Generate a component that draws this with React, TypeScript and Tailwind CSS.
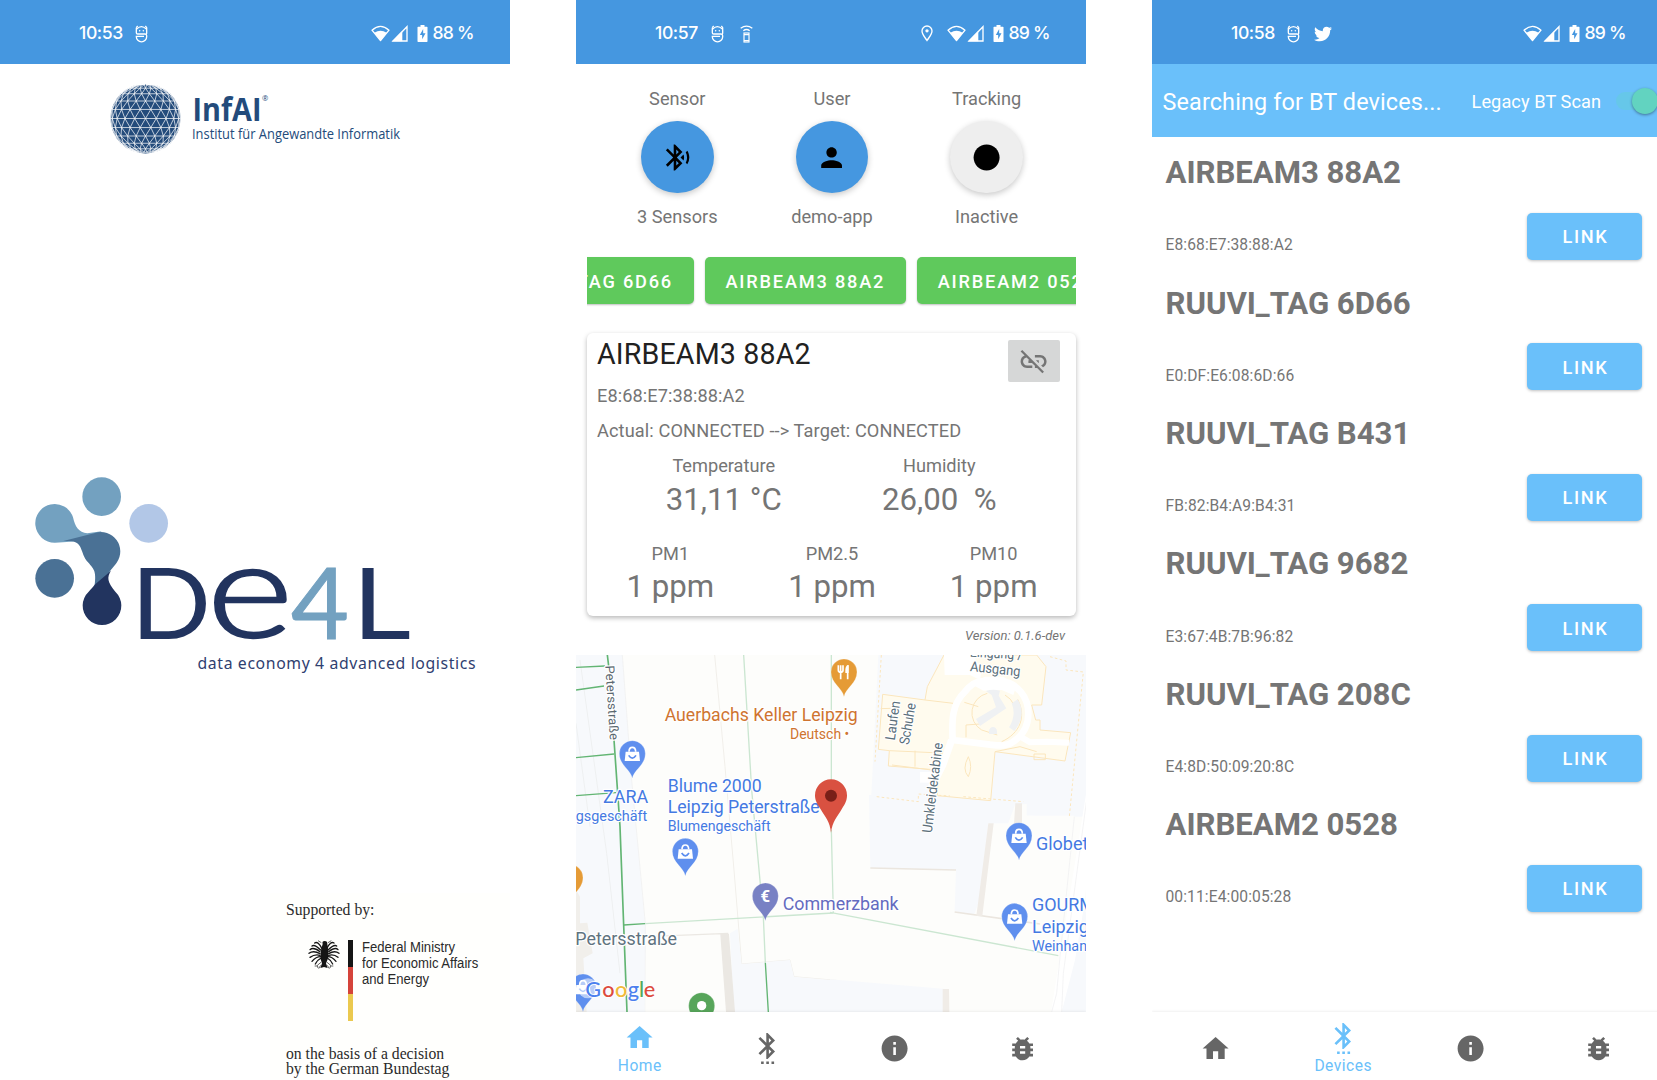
import React from "react";
import type { ReactNode } from "react";
import {
  MdBluetoothSearching,
  MdBugReport,
  MdHome,
  MdInfo,
  MdLens,
  MdLinkOff,
  MdPerson,
  MdSettingsBluetooth,
} from "react-icons/md";
import { FaTwitter } from "react-icons/fa";

/* ---------- status bar ---------- */

function FaceIcon() {
  return (
    <svg width="13" height="18" viewBox="0 0 39 54" fill="none" stroke="white" strokeWidth="4">
      <path d="M35 26V8l-4-5M4 8l4-5M4 8v15q0 4 4 4h22q5 0 5 5v3a15.500 15.500 0 0 1-31 0v-1h23" />
      <path d="M5 12Q19-2 34 12" strokeWidth="3.5" />
      <circle cx="14" cy="17" r="2.300" fill="white" stroke="none" />
      <circle cx="25" cy="17" r="2.300" fill="white" stroke="none" />
    </svg>
  );
}

function RemoteIcon() {
  return (
    <svg width="13" height="18" viewBox="0 0 39 54" fill="none" stroke="white" strokeWidth="4">
      <rect x="12" y="24" width="15" height="27" strokeWidth="3.5" />
      <path d="M10 17q9.500-7 19 0M2 10q17.500-13 35 0" />
      <path d="M12 29h15M12 47h15" />
    </svg>
  );
}

function PlaceIcon() {
  return (
    <svg width="12" height="17" viewBox="0 0 36 50" fill="none" stroke="white" strokeWidth="4">
      <path d="M18 46C10 34 3 27 3 17.500a15 15 0 0 1 30 0C33 27 26 34 18 46z" />
      <circle cx="18" cy="17" r="5" fill="white" stroke="none" />
    </svg>
  );
}

function WifiIcon() {
  return (
    <svg width="19" height="17" viewBox="0 0 57 50">
      <path d="M3 15Q28.500-8 54 15L28.500 46z" fill="none" stroke="white" strokeWidth="4" strokeLinejoin="round" />
      <path d="M10 23q18.500-12 37 0L28.500 47z" fill="white" />
    </svg>
  );
}

function SignalIcon() {
  return (
    <svg width="17" height="17" viewBox="0 0 51 51">
      <path d="M48 5v43H6z" fill="none" stroke="white" strokeWidth="4" />
      <path d="M34 18v31H3z" fill="white" />
    </svg>
  );
}

function BatteryIcon() {
  return (
    <svg width="11" height="17" viewBox="0 0 32 51">
      <path d="M10 0h12v5h7q2 0 2 2v42q0 2-2 2H3q-2 0-2-2V7q0-2 2-2h7z" fill="white" />
      <path d="M18 12L8 30h7v13l10-18h-7z" fill="#4597e0" />
    </svg>
  );
}

function StatusBar({ time, battery, extra, location }: { time: string; battery: string; extra?: ReactNode; location?: boolean }) {
  return (
    <header className="flex h-16 shrink-0 items-center bg-[#4597e0] pt-[3px] pl-[79px] font-['Inter'] text-[17.6px] font-medium text-white">
      <span className="w-14 tracking-[-0.4px]">{time}</span>
      <span className="flex w-[29px]"><FaceIcon /></span>
      <span className="flex w-[181px]">{extra}</span>
      <span className="flex w-[26px]">{location && <PlaceIcon />}</span>
      <WifiIcon />
      <span className="ml-[1px]"><SignalIcon /></span>
      <span className="ml-[9px]"><BatteryIcon /></span>
      <span className="ml-[4.500px] whitespace-nowrap tracking-[-0.8px]">{battery}</span>
    </header>
  );
}

/* ---------- bottom navigation ---------- */

const NAV = [
  { label: "Home", Icon: MdHome },
  { label: "Devices", Icon: MdSettingsBluetooth },
  { label: "Info", Icon: MdInfo },
  { label: "Debug", Icon: MdBugReport },
];

function BottomNav({ active }: { active: string }) {
  return (
    <nav className="grid h-[68px] shrink-0 grid-cols-4 bg-white shadow-[0_-1px_2px_rgba(0,0,0,0.06)]">
      {NAV.map(({ label, Icon }) =>
        label === active ? (
          <div key={label} className="flex flex-col items-center pt-[10.500px] text-[#6ac0fa]">
            <Icon size={31.2} />
            <span className="mt-[2.300px] text-[15.6px] leading-5 tracking-[0.5px]">{label}</span>
          </div>
        ) : (
          <div key={label} className="flex flex-col items-center pt-[20.700px] text-[#666666]">
            <Icon size={31.2} />
          </div>
        ),
      )}
    </nav>
  );
}

/* ---------- splash screen ---------- */

function globeLines() {
  const rad = Math.PI / 180;
  const out: string[] = [];
  const project = (lat: number, lon: number) =>
    `${(35 * Math.cos(lat * rad) * Math.sin(lon * rad)).toFixed(2)} ${(-35 * Math.sin(lat * rad)).toFixed(2)}`;
  for (let row = -5; row <= 5; row++) {
    const shift = row % 2 === 0 ? 0 : 9;
    for (let i = -6; i <= 6; i++) {
      const lon = i * 18 + shift;
      if (Math.abs(lon) > 90) continue;
      const a = project(row * 15, lon);
      if (lon + 18 <= 90) out.push(`M${a}L${project(row * 15, lon + 18)}`);
      if (lon + 9 <= 90) out.push(`M${a}L${project(row * 15 + 15, lon + 9)}`);
      if (lon - 9 >= -90) out.push(`M${a}L${project(row * 15 + 15, lon - 9)}`);
    }
  }
  return out.join("");
}

function InfaiLogo() {
  return (
    <svg width="300" height="76" viewBox="108 80 300 76" fill="#234b7b" className="ml-[108px]">
      <circle cx="145.500" cy="118.500" r="35" />
      <path d={globeLines()} transform="translate(145.500 118.500)" stroke="white" strokeWidth="0.9" strokeOpacity="0.8" fill="none" />
      <g fontFamily="'Open Sans', sans-serif">
        <text x="192.500" y="120.500" fontSize="33" fontWeight="700" textLength="69" lengthAdjust="spacingAndGlyphs">InfAI</text>
        <text x="262" y="101" fontSize="7.500">®</text>
        <text x="192" y="138.600" fontSize="15" textLength="208" lengthAdjust="spacingAndGlyphs">Institut für Angewandte Informatik</text>
      </g>
    </svg>
  );
}

function De4lLogo() {
  return (
    <svg width="450" height="206" viewBox="30 470 450 206" className="ml-[30px]">
      <g transform="translate(0 460) scale(0.33333)">
        <circle cx="305" cy="110" r="58" fill="#73a1c0" />
        <circle cx="446" cy="190" r="58" fill="#b2c7e7" />
        <circle cx="164" cy="355" r="58" fill="#4a7195" />
        <path d="M165 248A58 58 0 1 1 219 172C225 200 236 218 262 220L305 214L270 240L200 246z" fill="#73a1c0" />
        <path d="M190 243L285 219A58 58 0 0 1 350 308C338 324 326 335 322 350L283 385C290 335 284 330 264 307C238 278 252 243 206 243z" fill="#4a7195" />
        <path d="M333 332C320 352 322 365 346 395A58 58 0 1 1 266 395C273 386 280 380 284 374z" fill="#22345f" />
      </g>
      <g fontFamily="Lato, sans-serif" fill="#22345f">
        <text x="131" y="638.500" fontSize="98" textLength="80" lengthAdjust="spacingAndGlyphs">D</text>
        <text x="207" y="636.500" fontSize="132" fontWeight="300" stroke="#22345f" strokeWidth="2.500" textLength="86" lengthAdjust="spacingAndGlyphs">e</text>
        <text x="291" y="638.500" fontSize="98" fill="#73a1c0" stroke="#73a1c0" strokeWidth="1" textLength="58" lengthAdjust="spacingAndGlyphs">4</text>
        <text x="352" y="638.500" fontSize="98" textLength="59" lengthAdjust="spacingAndGlyphs">L</text>
      </g>
      <text x="197.500" y="669" fontFamily="'Noto Sans', sans-serif" fontSize="15.800" fill="#2f4070" textLength="278">
        data economy 4 advanced logistics
      </text>
    </svg>
  );
}

function Eagle() {
  return (
    <svg width="32" height="30" viewBox="0 0 96 90" fill="none" stroke="#151515">
      <path d="M44 12q-3-9 6-9 9 0 8 9l2 14q4 26-6 44l5 14-11-3-11 3 5-14Q34 52 40 26z" fill="#151515" stroke="none" />
      <g strokeWidth="4" strokeLinecap="round">
        <path d="M42 26Q30 2 20 9M38 30Q20 12 12 18M36 35Q16 20 6 29M36 41Q16 30 3 40M36 46Q20 42 6 52M38 50Q24 50 12 64M40 54Q30 58 22 72" />
        <path d="M56 26Q68 2 78 9M60 30Q78 12 86 18M62 35Q82 20 90 29M62 41Q80 30 93 40M62 46Q78 42 90 52M60 50Q72 50 84 64M58 54Q66 58 74 72" />
      </g>
      <path d="M40 66l-12 10 2 8M56 66l12 10-2 8M28 78l-8 0M68 78l8 0M38 76l-6 10M58 76l6 10M40 8L30 2M60 8l10-6" strokeWidth="2.500" stroke="#444" />
    </svg>
  );
}

function SplashScreen() {
  return (
    <section className="flex h-[1080px] w-[510px] shrink-0 flex-col overflow-hidden bg-white">
      <StatusBar time="10:53" battery="88 %" />
      <div className="pt-4"><InfaiLogo /></div>
      <div className="mt-[314px]"><De4lLogo /></div>
      <div className="mt-[217px] ml-[270px] flex-1 bg-[#fffffd] pt-[1.500px] pl-[16px] text-[#2a2a2a]">
        <p className="w-max origin-left scale-x-[0.98] font-['Liberation_Serif'] text-[16px] leading-[30px]">Supported by:</p>
        <div className="mt-[15px] ml-[22px] flex">
          <Eagle />
          <div className="ml-[8px] flex h-[81px] w-[5px] flex-col">
            <i className="flex-1 bg-[#151515]" />
            <i className="flex-1 bg-[#d5443a]" />
            <i className="flex-1 bg-[#ebc94f]" />
          </div>
          <p className="-mt-[1px] ml-[8.500px] origin-left scale-x-[0.845] font-['Liberation_Sans'] text-[15.500px] leading-4 whitespace-nowrap">
            Federal Ministry
            <br />
            for Economic Affairs
            <br />
            and Energy
          </p>
        </div>
        <p className="mt-[25.500px] w-max origin-left scale-x-[0.98] font-['Liberation_Serif'] text-[16px] leading-[15px] whitespace-nowrap">
          on the basis of a decision
          <br />
          by the German Bundestag
        </p>
      </div>
    </section>
  );
}

/* ---------- home screen ---------- */

function Fab({ title, caption, tone, children }: { title: string; caption: string; tone: string; children: ReactNode }) {
  return (
    <div className="flex flex-col items-center">
      <span className="leading-6">{title}</span>
      <button className={`mt-[10px] flex size-[72.700px] items-center justify-center rounded-full text-black shadow-[0_2px_6px_rgba(0,0,0,0.22)] ${tone}`}>
        {children}
      </button>
      <span className="mt-[12px] leading-6">{caption}</span>
    </div>
  );
}

function Chip({ children }: { children: ReactNode }) {
  return (
    <span className="flex h-[47px] shrink-0 items-center rounded-[5px] bg-[#5fc95c] px-[21px] pt-px text-[18.2px] font-medium tracking-[1.8px] whitespace-nowrap text-white shadow-[0_1px_2px_rgba(0,0,0,0.25)]">
      {children}
    </span>
  );
}

function Reading({ label, value }: { label: string; value: string }) {
  return (
    <div className="flex flex-col items-center">
      <span className="leading-6">{label}</span>
      <span className="mt-[3.700px] text-[31.2px] leading-9 whitespace-pre">{value}</span>
    </div>
  );
}

function Pin({ x, y, fill, children }: { x: number; y: number; fill: string; children?: ReactNode }) {
  return (
    <g transform={`translate(${x} ${y})`}>
      <path d="M0 74C-5 48-39 34-39 0A39 39 0 1 1 39 0C39 34 5 48 0 74z" fill={fill} stroke="#ffffff" strokeOpacity="0.35" strokeWidth="2" />
      {children}
    </g>
  );
}

function Bag() {
  return (
    <g>
      <path d="M-20-6h40l3 28h-46z" fill="white" />
      <path d="M-10-6q0-13 10-13t10 13" fill="none" stroke="white" strokeWidth="5" />
      <path d="M-11 5q11 17 22 0" fill="none" stroke="#5b8def" strokeWidth="5" />
    </g>
  );
}

function ShopPin({ x, y }: { x: number; y: number }) {
  return <Pin x={x} y={y} fill="#5f8fee"><Bag /></Pin>;
}

function Mall() {
  return (
    <g transform="translate(870 650) scale(0.33333)">
      <path d="M165 150L172 110L222 15H500L528 50L515 165L485 165L497 210H510V240L602 248L585 333L375 305L362 452L202 437L205 360L55 348L58 302L25 298L38 133z" fill="#fffbee" stroke="#fbe6bd" strokeWidth="3" />
      <path d="M165 150L250 160M58 302L235 310M135 302V350M66 345L200 362M62 175L32 176M492 312H526V329H492zM375 305L450 290L500 305" fill="none" stroke="#fbe6bd" strokeWidth="3" />
      <path d="M34 15L15 335M20 440L145 455V432L240 438M280 440L460 455M540 20L588 33V60L640 66L598 500" fill="none" stroke="#fbe6bd" strokeWidth="3" strokeDasharray="8 7" />
      <path d="M222 15H310L335 60L330 90L300 75H224z" fill="white" />
      <path d="M248 275C246 220 242 165 285 125C305 100 325 90 345 95H400C440 100 475 140 475 190C475 240 450 262 430 275C410 290 390 287 360 284L248 270" fill="none" stroke="white" strokeWidth="20" strokeLinejoin="round" />
      <path d="M300 100L345 80H400L440 105L430 135L395 120L340 122z" fill="white" />
      <path d="M455 262L480 277L530 275L597 278" fill="none" stroke="white" strokeWidth="18" />
      <path d="M245 270L218 345L180 420" fill="none" stroke="white" strokeWidth="22" />
      <path d="M352 130A60 60 0 0 0 335 240L382 255M405 135A62 62 0 0 1 432 165M443 148C470 200 450 250 395 275M288 262V225L330 222M283 157L325 170M295 320q14 30 0 60-20-22 0-60z" fill="none" stroke="#fbe6bd" strokeWidth="3" />
      <path d="M348 123Q368 116 390 122L386 137L409 175L330 228L318 207L378 172L365 135zM425 160L443 148Q472 195 433 243L417 232Q440 195 425 160zM357 252v-8a12 13 0 0 1 24 0v8z" fill="#eff1f3" />
      <path d="M150 366H198V398H150z" fill="white" />
    </g>
  );
}

function StreetMap() {
  return (
    <svg width="510" height="357" viewBox="576 655 510 357" className="block shrink-0" fontFamily="Roboto, sans-serif">
      <rect x="576" y="655" width="510" height="357" fill="#fdfdfb" />
      {/* western half */}
      <g transform="translate(570 640) scale(0.33333)">
        <path d="M18 45H157L185 420L228 880L224 1116H18z" fill="#f7f9fc" />
        <path d="M157 45L185 420L226 850V1116" fill="none" stroke="#efefef" strokeWidth="2" />
        <path d="M30 60L110 640L150 1000M18 250L60 560" fill="none" stroke="#eef0f1" strokeWidth="3" />
        <path d="M434 45L465 380L492 690L515 972L660 960L672 1010L810 1022" fill="none" stroke="#f1efea" strokeWidth="3" />
        <path d="M480 880L503 866L515 972L660 960L672 1010L810 1022V1116H492z" fill="#f7f9fc" />
        <path d="M18 750L30 770V850L52 848L68 940L40 955L50 1116H18z" fill="#f1efeb" />
        <path d="M228 885L453 882L472 1116H226z" fill="#fdfdfb" />
        <path d="M228 890L475 880M453 884H475L493 1116H470z" fill="#ebe8e3" stroke="#ebe8e3" strokeWidth="4" />
        <g fill="none" stroke="#62b573" strokeWidth="4">
          <path d="M112 45L116 78M132 300L150 560L161 855L171 1116" strokeWidth="5" />
          <path d="M18 82L105 78M18 150L102 138M18 353L132 342M18 467L138 458M161 855L225 851M586 968L595 1116" />
        </g>
        <g fill="none" stroke="#cbe6d1" strokeWidth="4">
          <path d="M521 45L545 450L580 830L586 968M225 851L790 819M784 45V420M784 570L790 819" />
        </g>
      </g>
      {/* eastern half */}
      <g transform="translate(830 640) scale(0.33333)">
        <path d="M145 45H770V530L590 527V492L555 495L430 830L374 812L378 690L121 684L117 465H124z" fill="#f7f9fc" />
        <path d="M0 1018L357 1048V1116H0z" fill="#f7f9fc" />
        <path d="M357 1048L680 1060V1116H357z" fill="#fdfdfb" />
        <path d="M475 550H555L575 527H733L690 950L374 820L445 825z" fill="#fdfdfb" />
        <path d="M121 684L378 690M374 816L630 852" fill="none" stroke="#ebe6df" strokeWidth="5" />
        <path d="M475 550H491L457 828H439zM556 490H576V560L552 552zM338 1047H357L358 1116H338z" fill="#f0ece7" />
        <path d="M776 430V680L720 1116H663L770 450z" fill="white" />
        <path d="M776 720V1116H695L735 960z" fill="#f7f9fc" />
        <path d="M770 480L700 1000L695 1116M733 530L690 950L680 1060L665 1116" fill="none" stroke="#eeeff0" strokeWidth="2" />
        <path d="M0 817L685 947" stroke="#cbe6d1" strokeWidth="4" />
      </g>
      <Mall />
      {/* places, western half */}
      <g transform="translate(570 640) scale(0.33333)" stroke="white" strokeWidth="7" paintOrder="stroke" strokeLinejoin="round">
        <text transform="translate(106 77) rotate(86.500)" fontSize="38" fill="#5b6870" textLength="224" lengthAdjust="spacingAndGlyphs">Petersstraße</text>
        <g fill="#cf7430">
          <text x="284" y="243" fontSize="53" textLength="579" lengthAdjust="spacingAndGlyphs">Auerbachs Keller Leipzig</text>
          <text x="660" y="298" fontSize="43" textLength="178" lengthAdjust="spacingAndGlyphs">Deutsch •</text>
        </g>
        <g fill="#4479e2">
          <text x="99" y="489" fontSize="54" textLength="136" lengthAdjust="spacingAndGlyphs">ZARA</text>
          <text x="232" y="543" fontSize="43" textAnchor="end" textLength="215" lengthAdjust="spacingAndGlyphs">gsgeschäft</text>
          <text x="293" y="456" fontSize="54" textLength="282" lengthAdjust="spacingAndGlyphs">Blume 2000</text>
          <text x="293" y="518" fontSize="54" textLength="456" lengthAdjust="spacingAndGlyphs">Leipzig Peterstraße</text>
          <text x="293" y="573" fontSize="43" textLength="309" lengthAdjust="spacingAndGlyphs">Blumengeschäft</text>
        </g>
        <text x="638" y="809" fontSize="54" fill="#646bc0" textLength="348" lengthAdjust="spacingAndGlyphs">Commerzbank</text>
        <text x="16" y="916" fontSize="53" fill="#5f7380" textLength="305" lengthAdjust="spacingAndGlyphs">Petersstraße</text>
      </g>
      <g transform="translate(570 640) scale(0.33333)">
        <ShopPin x={187} y={341} />
        <ShopPin x={346} y={634} />
        <ShopPin x={39} y={1041} />
        <Pin x={0} y={713} fill="#e59b36" />
        <Pin x={586} y={768} fill="#7881c4">
          <text y="17" fontSize="50" fontWeight="700" fill="white" textAnchor="middle">€</text>
        </Pin>
        <Pin x={395} y={1097} fill="#57a55a"><circle r="14" fill="white" /></Pin>
        <Pin x={822} y={96} fill="#e59b36">
          <path d="M-17-20v15q0 6 7 6t7-6v-15M-10-20v42M11-20v42" fill="none" stroke="white" strokeWidth="5" />
          <path d="M14-21v24H4v-10q0-12 10-14z" fill="white" />
        </Pin>
        <path d="M783 578C780 545 765 530 752 508C740 490 735 480 735 466A48 48 0 0 1 831 466C831 480 827 490 815 508C802 530 787 545 783 578z" fill="#d95141" />
        <circle cx="783" cy="467" r="18" fill="#791f18" />
        <circle cx="54" cy="1045" r="30" fill="white" fillOpacity="0.55" />
        <g fontFamily="Lato, sans-serif" fontSize="65" fontWeight="500" stroke="white" strokeWidth="5" paintOrder="stroke">
          <text y="1070">
            <tspan x="46" fill="#4c80ee">G</tspan>
            <tspan x="97" fill="#dc4b3e">o</tspan>
            <tspan x="135" fill="#f0b93a">o</tspan>
            <tspan x="173" fill="#4c80ee">g</tspan>
            <tspan x="207" fill="#55a95b">l</tspan>
            <tspan x="221" fill="#dc4b3e">e</tspan>
          </text>
        </g>
      </g>
      {/* places, eastern half */}
      <g transform="translate(830 640) scale(0.33333)" stroke="white" strokeWidth="7" paintOrder="stroke" strokeLinejoin="round">
        <g fill="#5b6f7b" fontSize="42">
          <text transform="translate(419 50) rotate(3)" textLength="158" lengthAdjust="spacingAndGlyphs">Eingang /</text>
          <text transform="translate(419 93) rotate(6)" textLength="152" lengthAdjust="spacingAndGlyphs">Ausgang</text>
          <text transform="translate(194 302) rotate(-82)" textLength="118" lengthAdjust="spacingAndGlyphs">Laufen</text>
          <text transform="translate(236 316) rotate(-80)" textLength="126" lengthAdjust="spacingAndGlyphs">Schuhe</text>
          <text transform="translate(305 580) rotate(-83)" textLength="272" lengthAdjust="spacingAndGlyphs">Umkleidekabine</text>
        </g>
        <g fill="#4479e2" fontSize="54">
          <text x="618" y="629">Globetrotter</text>
          <text x="606" y="814">GOURMET</text>
          <text x="606" y="879">Leipzig</text>
          <text x="606" y="932" fontSize="43">Weinhandlung</text>
        </g>
      </g>
      <g transform="translate(830 640) scale(0.33333)">
        <ShopPin x={567} y={587} />
        <ShopPin x={554} y={829} />
      </g>
    </svg>
  );
}

function HomeScreen() {
  return (
    <section className="ml-[66px] flex h-[1080px] w-[510px] shrink-0 flex-col overflow-hidden bg-white text-[18.2px] text-[#757575]">
      <StatusBar time="10:57" battery="89 %" extra={<RemoteIcon />} location />
      <div className="mt-[22.800px] mr-[22px] ml-[24px] grid grid-cols-3">
        <Fab title="Sensor" caption="3 Sensors" tone="bg-[#4597e0]"><MdBluetoothSearching size={31.2} /></Fab>
        <Fab title="User" caption="demo-app" tone="bg-[#4597e0]"><MdPerson size={31.2} /></Fab>
        <Fab title="Tracking" caption="Inactive" tone="bg-[#eeeeee]"><MdLens size={31.2} /></Fab>
      </div>
      <div className="mx-[10.500px] mt-[24.700px] flex h-[53px] shrink-0 gap-[10.500px] overflow-hidden pt-[3px]">
        <div className="flex w-[107.500px] shrink-0 justify-end">
          <Chip>RUUVI_TAG 6D66</Chip>
        </div>
        <Chip>AIRBEAM3 88A2</Chip>
        <Chip>AIRBEAM2 0528</Chip>
      </div>
      <div className="mx-[10.500px] mt-[26px] h-[283.200px] shrink-0 rounded-[6px] bg-white pt-[3.500px] shadow-[0_2px_5px_rgba(0,0,0,0.28)]">
        <div className="flex justify-between pr-[15.500px] pl-[10.500px]">
          <div className="flex flex-col">
            <h2 className="text-[28.600px] leading-[34px] tracking-[0.15px] text-[#212121]">AIRBEAM3 88A2</h2>
            <span className="mt-[13px] leading-6 tracking-[0.07px]">E8:68:E7:38:88:A2</span>
          </div>
          <button className="mt-[3.500px] flex h-[42px] w-[52px] items-center justify-center rounded-[2px] bg-[#d6d7d7] text-[#757575]">
            <MdLinkOff size={31.2} />
          </button>
        </div>
        <p className="mt-[11.200px] pl-[10.500px] leading-6 tracking-[0.11px]">Actual: CONNECTED --&gt; Target: CONNECTED</p>
        <div className="mr-[28.500px] ml-[29.500px] mt-[11.200px] grid grid-cols-2">
          <Reading label="Temperature" value="31,11 °C" />
          <Reading label="Humidity" value="26,00  %" />
        </div>
        <div className="mr-px ml-[3px] mt-[23.800px] grid grid-cols-3">
          <Reading label="PM1" value="1 ppm" />
          <Reading label="PM2.5" value="1 ppm" />
          <Reading label="PM10" value="1 ppm" />
        </div>
      </div>
      <p className="h-[38.500px] shrink-0 pt-3 pr-[21px] text-right text-[13px] leading-4 italic">Version: 0.1.6-dev</p>
      <StreetMap />
      <BottomNav active="Home" />
    </section>
  );
}

/* ---------- device list ---------- */

const DEVICES = [
  { name: "AIRBEAM3 88A2", mac: "E8:68:E7:38:88:A2" },
  { name: "RUUVI_TAG 6D66", mac: "E0:DF:E6:08:6D:66" },
  { name: "RUUVI_TAG B431", mac: "FB:82:B4:A9:B4:31" },
  { name: "RUUVI_TAG 9682", mac: "E3:67:4B:7B:96:82" },
  { name: "RUUVI_TAG 208C", mac: "E4:8D:50:09:20:8C" },
  { name: "AIRBEAM2 0528", mac: "00:11:E4:00:05:28" },
];

function DevicesScreen() {
  return (
    <section className="ml-[66px] flex h-[1080px] w-[510px] shrink-0 flex-col overflow-hidden bg-white text-[#757575]">
      <StatusBar time="10:58" battery="89 %" extra={<span className="-ml-[2px]"><FaTwitter size={18} /></span>} />
      <div className="flex h-[73px] shrink-0 items-center bg-[#6ac0fa] pl-[10.500px] whitespace-nowrap text-white">
        <h1 className="w-[309px] pt-[4px] text-[23.400px] tracking-[0.13px]">Searching for BT devices...</h1>
        <span className="w-[144.500px] pt-[2px] text-[18.2px] tracking-[0.08px]">Legacy BT Scan</span>
        <span className="flex h-[18px] w-[42px] items-center justify-end rounded-full bg-[#66c7e9]">
          <i className="size-[26px] shrink-0 rounded-full bg-[#62d3c0] shadow-[0_1px_3px_rgba(0,0,0,0.4)]" />
        </span>
      </div>
      <ul className="h-[875px] shrink-0">
        {DEVICES.map((device) => (
          <li key={device.mac} className="flex h-[130.400px] justify-between pr-[20px] pl-[13.500px]">
            <div className="flex flex-col pt-[18.200px]">
              <h2 className="text-[31.2px] leading-9 font-bold tracking-[-0.05px]">{device.name}</h2>
              <span className="mt-[44.200px] text-[15.600px] leading-5 tracking-[0.1px]">{device.mac}</span>
            </div>
            <button className="mt-[76px] h-[47px] w-[114.700px] rounded-[5px] bg-[#6ac0fa] pt-px pl-[1.600px] text-[18.2px] font-medium tracking-[1.62px] text-white shadow-[0_1px_3px_rgba(0,0,0,0.25)]">
              LINK
            </button>
          </li>
        ))}
      </ul>
      <BottomNav active="Devices" />
    </section>
  );
}

export default function App() {
  return (
    <main className="flex h-[1080px] w-[1657px] overflow-hidden bg-white font-['Roboto',sans-serif]">
      <SplashScreen />
      <HomeScreen />
      <DevicesScreen />
    </main>
  );
}
